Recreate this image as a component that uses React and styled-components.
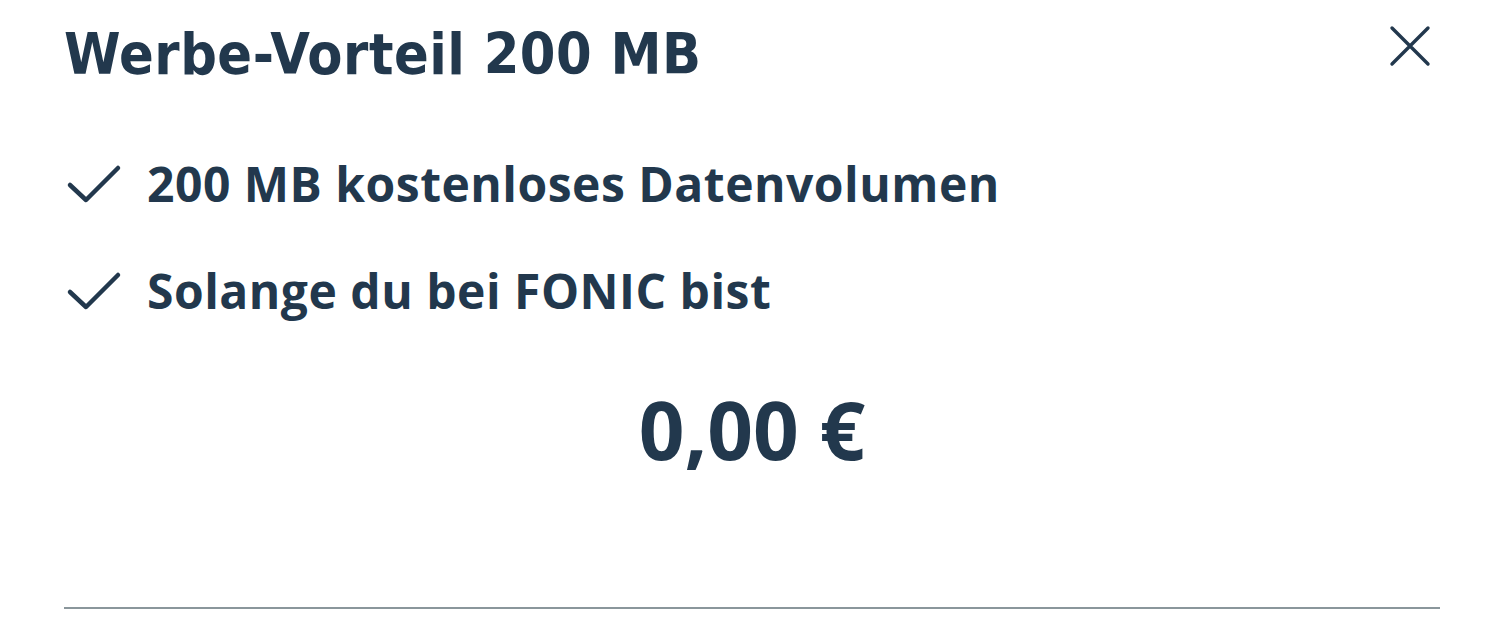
import styled, { createGlobalStyle } from "styled-components";

const GlobalStyle = createGlobalStyle`
  body {
    margin: 0;
    background: #ffffff;
    font-family: "Open Sans", "Liberation Sans", sans-serif;
  }
`;

const Modal = styled.div`
  width: 1503px;
  height: 641px;
  box-sizing: border-box;
  padding: 19px 63px 0 64px;
  display: flex;
  flex-direction: column;
  color: #22384d;
`;

const Header = styled.div`
  display: flex;
  justify-content: space-between;
  align-items: flex-start;
`;

const Title = styled.h1`
  margin: 0;
  font-family: "DejaVu Sans Condensed", "DejaVu Sans", sans-serif;
  font-weight: 700;
  font-size: 57px;
  line-height: 70px;
  letter-spacing: 0.5px;
`;

const CloseButton = styled.button`
  border: none;
  background: none;
  padding: 0;
  margin: 5px 8px 0 0;
  width: 44px;
  height: 44px;
  color: #22384d;
  cursor: pointer;
`;

const FeatureList = styled.ul`
  list-style: none;
  margin: 68px 0 0;
  padding: 0;
  display: flex;
  flex-direction: column;
  gap: 53px;
`;

const Feature = styled.li`
  display: flex;
  align-items: center;
  gap: 25px;
  font-weight: 700;
  font-size: 48px;
  line-height: 54px;
  letter-spacing: 0.5px;
`;

const Check = styled.svg`
  width: 56px;
  height: 44px;
  margin-left: 2px;
  flex: none;
`;

const Price = styled.div`
  margin-top: 66px;
  text-align: center;
  font-weight: 700;
  font-size: 80px;
  line-height: 90px;
`;

const Divider = styled.hr`
  margin: auto 0 32px;
  border: none;
  border-top: 2px solid #8a969b;
`;

const features = [
  "200 MB kostenloses Datenvolumen",
  "Solange du bei FONIC bist",
];

export default function App() {
  return (
    <>
      <GlobalStyle />
      <Modal>
        <Header>
          <Title>Werbe-Vorteil 200 MB</Title>
          <CloseButton aria-label="Schließen">
            <svg viewBox="0 0 44 44" width="44" height="44">
              <path
                d="M4 4 L40 40 M40 4 L4 40"
                stroke="currentColor"
                strokeWidth="3.4"
                strokeLinecap="round"
              />
            </svg>
          </CloseButton>
        </Header>
        <FeatureList>
          {features.map((text) => (
            <Feature key={text}>
              <Check viewBox="0 0 56 44">
                <path
                  d="M4 23 L20 38 L52 6"
                  fill="none"
                  stroke="currentColor"
                  strokeWidth="4.5"
                  strokeLinecap="round"
                  strokeLinejoin="round"
                />
              </Check>
              {text}
            </Feature>
          ))}
        </FeatureList>
        <Price>0,00 €</Price>
        <Divider />
      </Modal>
    </>
  );
}
